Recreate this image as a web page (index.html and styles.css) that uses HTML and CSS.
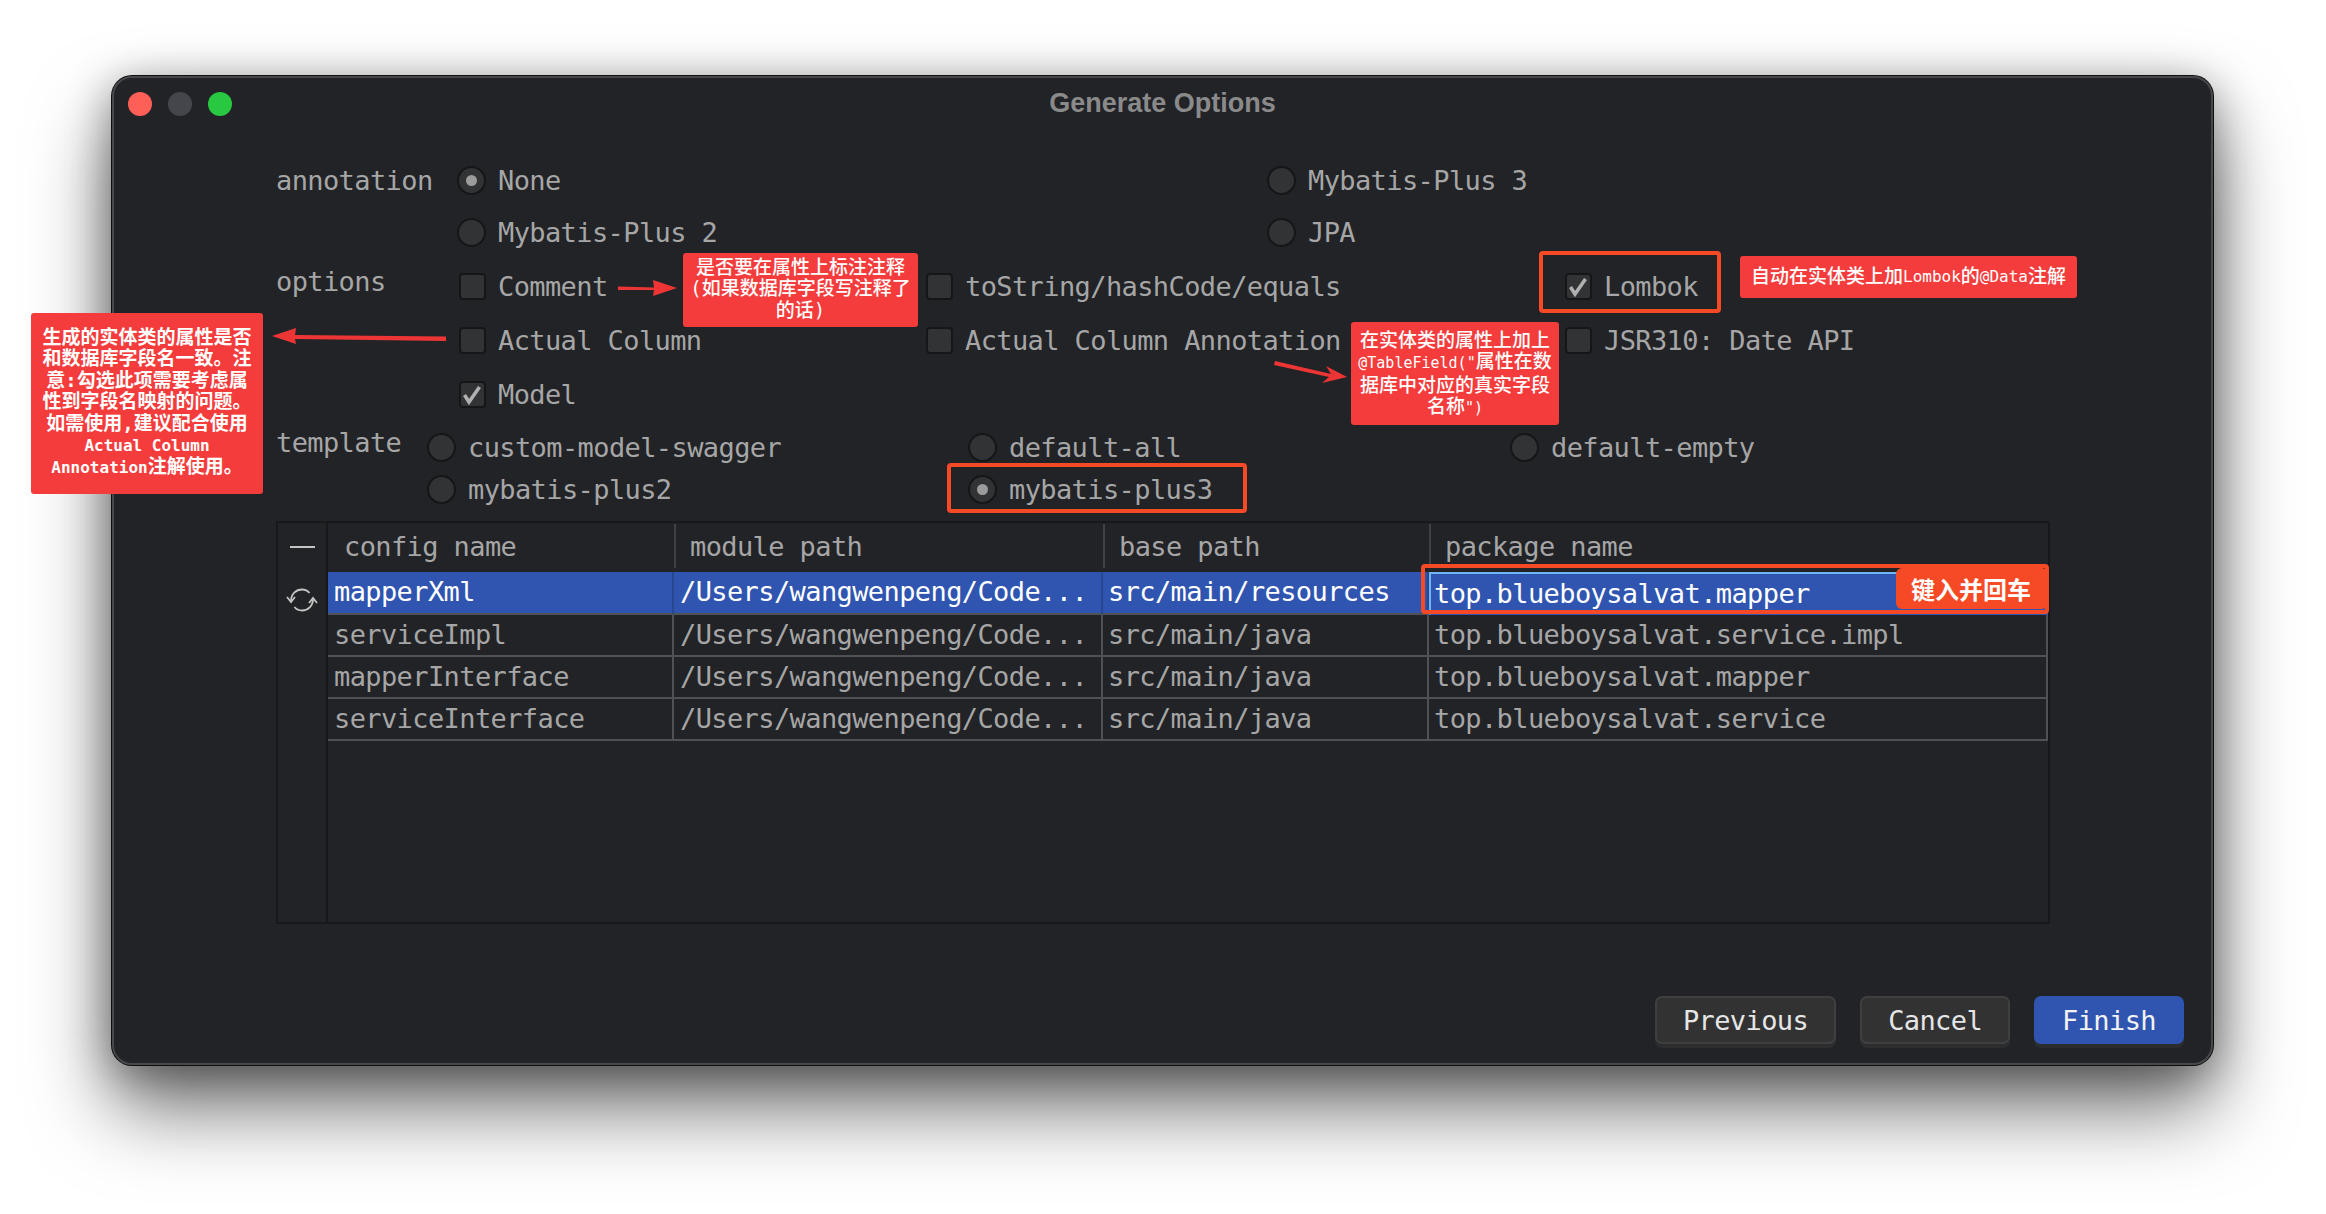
FILE: index.html
```html
<!DOCTYPE html>
<html lang="en">
<head>
    <meta charset="UTF-8">
    <title>Generate Options</title>
    <link rel="stylesheet" href="styles.css">
</head>
<body>
<div class="page">
    <div class="window">
        <div class="titlebar">
            <div class="lights">
                <span class="light light-red"></span>
                <span class="light light-gray"></span>
                <span class="light light-green"></span>
            </div>
            <div class="title">Generate Options</div>
        </div>

        <div class="form">
            <!-- annotation -->
            <div class="group group-annotation">
                <div class="label">annotation</div>
                <div class="opt"><span class="radio on"></span>None</div>
                <div class="opt"><span class="radio"></span>Mybatis-Plus 3</div>
                <div></div>
                <div class="opt"><span class="radio"></span>Mybatis-Plus 2</div>
                <div class="opt"><span class="radio"></span>JPA</div>
            </div>

            <!-- options -->
            <div class="group group-options">
                <div class="label label-up">options</div>
                <div class="opt"><span class="check"></span>Comment</div>
                <div class="opt"><span class="check"></span>toString/hashCode/equals</div>
                <div class="opt"><span class="check on"><svg viewBox="0 0 23 23"><path d="M3.500 12l4.500 7 10.500-15" /></svg></span>Lombok</div>
                <div></div>
                <div class="opt"><span class="check"></span>Actual Column</div>
                <div class="opt"><span class="check"></span>Actual Column Annotation</div>
                <div class="opt"><span class="check"></span>JSR310: Date API</div>
                <div></div>
                <div class="opt"><span class="check on"><svg viewBox="0 0 23 23"><path d="M3.500 12l4.500 7 10.500-15" /></svg></span>Model</div>
            </div>

            <!-- template -->
            <div class="group group-template">
                <div class="label label-up">template</div>
                <div class="opt"><span class="radio"></span>custom-model-swagger</div>
                <div class="opt"><span class="radio"></span>default-all</div>
                <div class="opt"><span class="radio"></span>default-empty</div>
                <div></div>
                <div class="opt"><span class="radio"></span>mybatis-plus2</div>
                <div class="opt"><span class="radio on"></span>mybatis-plus3</div>
            </div>

            <!-- config table -->
            <div class="table">
                <div class="tools">
                    <span class="minus"></span>
                    <svg class="refresh" viewBox="0 0 32 26">
                        <path d="M5 14C5 7 10 2.500 16 2.500c3 0 5.500 1 7.500 3.500" />
                        <path d="M1 10l4 5 4-5" />
                        <path d="M27 12c0 7-5 11.500-11 11.500-3 0-5.500-1-7.500-3.500" />
                        <path d="M23 16l4-5 4 5" />
                    </svg>
                </div>
                <div class="grid">
                    <div class="head">config name</div>
                    <div class="head">module path</div>
                    <div class="head">base path</div>
                    <div class="head">package name</div>

                    <div class="cell sel">mapperXml</div>
                    <div class="cell sel">/Users/wangwenpeng/Code...</div>
                    <div class="cell sel">src/main/resources</div>
                    <div class="cell sel edit">top.blueboysalvat.mapper</div>

                    <div class="cell">serviceImpl</div>
                    <div class="cell">/Users/wangwenpeng/Code...</div>
                    <div class="cell">src/main/java</div>
                    <div class="cell">top.blueboysalvat.service.impl</div>

                    <div class="cell">mapperInterface</div>
                    <div class="cell">/Users/wangwenpeng/Code...</div>
                    <div class="cell">src/main/java</div>
                    <div class="cell">top.blueboysalvat.mapper</div>

                    <div class="cell">serviceInterface</div>
                    <div class="cell">/Users/wangwenpeng/Code...</div>
                    <div class="cell">src/main/java</div>
                    <div class="cell">top.blueboysalvat.service</div>
                </div>
            </div>
        </div>

        <div class="footer">
            <button class="btn">Previous</button>
            <button class="btn">Cancel</button>
            <button class="btn btn-primary">Finish</button>
        </div>
    </div>

    <!-- screenshot annotations drawn on top -->
    <svg class="arrows" viewBox="0 0 2326 1214">
        <path d="M618 286.500L654 287.500 653 280 677 288 653 296 654 290 618 290z" />
        <path d="M446 336.500L295 335 296 328 272 336 296 344 295 339 446 341z" />
        <path d="M1275 361L1331 374 1326 366 1347 377 1322 383 1329 377 1274 365z" />
    </svg>
    <div class="mark mark-lombok"></div>
    <div class="mark mark-plus3"></div>
    <div class="mark mark-package"></div>

    <div class="note note-actual">生成的实体类的属性是否<br>和数据库字段名一致。注<br>意:勾选此项需要考虑属<br>性到字段名映射的问题。<br>如需使用,建议配合使用<br><span class="lat">Actual Column</span><br><span class="lat">Annotation</span>注解使用。</div>
    <div class="note note-comment">是否要在属性上标注注释<br>(如果数据库字段写注释了<br>的话)</div>
    <div class="note note-field">在实体类的属性上加上<br><span class="lat">@TableField("</span>属性在数<br>据库中对应的真实字段<br>名称<span class="lat">")</span></div>
    <div class="note note-lombok">自动在实体类上加<span class="lat">Lombok</span>的<span class="lat">@Data</span>注解</div>
    <div class="note note-enter">键入并回车</div>
</div>
</body>
</html>
```

FILE: styles.css
```css
* { box-sizing: border-box; margin: 0; padding: 0; }
html, body { width: 100%; height: 100%; overflow: hidden; background: #fff; }
body { font-family: "DejaVu Sans Mono", monospace; font-size: 27px; letter-spacing: -0.6px; color: #a6a6a6; }

.page {
    position: relative;
    width: 2326px; height: 1214px;
    padding: 76px 113px 149px 112px;
}

/* --- window --- */
.window {
    height: 100%;
    display: flex; flex-direction: column;
    background: #222327;
    border: 2px solid #47484b;
    border-radius: 20px;
    box-shadow: 0 0 0 1px #0e0e0e, 0 44px 80px rgba(0, 0, 0, 0.55), 0 8px 44px rgba(0, 0, 0, 0.38);
}
.titlebar {
    height: 52px; flex: none;
    display: grid; grid-template-columns: 1fr auto 1fr; align-items: center;
}
.lights { display: flex; gap: 16px; padding-left: 14px; }
.light { width: 24px; height: 24px; border-radius: 50%; }
.light-red { background: #fe5f57; }
.light-gray { background: #45464b; }
.light-green { background: #28c840; }
.title {
    font-family: "Liberation Sans", sans-serif; font-weight: 700; font-size: 27px;
    letter-spacing: 0; color: #8a8a8a; padding-bottom: 2px;
}

/* --- form --- */
.form { padding: 24px 0 0 162px; }
.group { display: grid; }
.group-annotation { grid-template-columns: 181px 810px 1fr; grid-auto-rows: 52px; margin-bottom: 1px; }
.group-options { grid-template-columns: 183px 467px 639px 1fr; grid-auto-rows: 54px; }
.group-template { grid-template-columns: 151px 541px 542px 1fr; grid-auto-rows: 42px; margin-top: 5px; }

.label { display: flex; align-items: center; }
.label-up { padding-bottom: 10px; }
.opt { display: flex; align-items: center; white-space: pre; }

.radio {
    width: 29px; height: 29px; flex: none; margin-right: 12px;
    display: flex; align-items: center; justify-content: center;
    background: #323334; border: 2px solid #151618; border-radius: 50%;
}
.radio.on::after {
    content: ""; width: 11px; height: 11px; border-radius: 50%; background: #9c9c9c;
}
.check {
    width: 27px; height: 27px; flex: none; margin-right: 12px;
    background: #323334; border: 2px solid #151618; border-radius: 4px;
}
.check svg { display: block; width: 23px; height: 23px; }
.check path { fill: none; stroke: #b0b0b0; stroke-width: 3.500; }

/* --- table --- */
.table {
    display: flex;
    width: 1774px; height: 403px; margin-top: 11px;
    border: 2px solid #17181a;
}
.tools {
    width: 50px; flex: none;
    display: flex; flex-direction: column; align-items: center;
    border-right: 2px solid #17181a;
}
.minus { width: 25px; height: 2px; margin-top: 23px; background: #c4c4c4; }
.refresh { width: 32px; height: 26px; margin-top: 39px; }
.refresh path { fill: none; stroke: #c4c4c4; stroke-width: 1.800; }

.grid {
    flex: 1; align-self: flex-start;
    display: grid;
    grid-template-columns: 346px 429px 326px 619px;
    grid-template-rows: 49px 43px repeat(3, 42px);
}
.head {
    display: flex; align-items: center;
    padding: 0 0 2px 16px;
    position: relative;
}
.head + .head::before {
    content: ""; position: absolute; left: 0; top: 1px; bottom: 4px;
    width: 2px; background: #404145;
}
.cell {
    display: flex; align-items: center;
    padding: 0 0 2px 6px;
    border-bottom: 2px solid #505154;
    border-right: 2px solid #505154;
    white-space: pre;
}
.cell:nth-child(4n+3), .cell:nth-child(4n) { padding-left: 5px; }
.cell.sel { background: #2f55b0; color: #fff; border-right-color: #27478f; }
.cell.sel.edit {
    padding-left: 3px;
    border: 1px solid #2f55b0; border-top: 2px solid #6fb6f5;
    border-left: 2px solid #6fb6f5;
}

/* --- footer --- */
.footer {
    margin-top: auto;
    display: flex; justify-content: flex-end; gap: 24px;
    padding: 0 27px 19px 0;
}
.btn {
    height: 48px; padding: 0 26px;
    font: inherit; letter-spacing: inherit; color: #e6e6e6;
    background: #323233; border: 2px solid #3f3f40; border-radius: 7px;
    box-shadow: 0 4px 0 #2c2d2f;
}
.btn-primary { background: #2f55b0; border-color: #2f55b0; color: #f2f2f2; }

/* --- annotations on top of the screenshot --- */
.arrows { position: absolute; left: 0; top: 0; width: 2326px; height: 1214px; pointer-events: none; }
.arrows path { fill: #ee3535; }

.mark { position: absolute; border: 4px solid #f64a26; border-radius: 4px; }
.mark-lombok { left: 1539px; top: 251px; width: 182px; height: 62px; }
.mark-plus3 { left: 947px; top: 463px; width: 300px; height: 50px; }
.mark-package { left: 1421px; top: 564px; width: 628px; height: 50px; }

.note {
    position: absolute;
    display: flex; align-items: center; justify-content: center;
    background: #f43c3c; color: #fff; border-radius: 3px;
    font-family: "DejaVu Sans Mono", "Noto Sans CJK SC", monospace;
    font-size: 19px; line-height: 21.400px; letter-spacing: 0; text-align: center;
    font-weight: 500; white-space: nowrap;
}
.lat { font-size: 16px; }
.note-actual { left: 31px; top: 313px; width: 232px; height: 181px; font-weight: 700; display: block; padding-top: 14px; }
.note-comment { left: 683px; top: 253px; width: 235px; height: 74px; display: block; padding-top: 4px; }
.note-field { left: 1351px; top: 322px; width: 208px; height: 103px; display: block; padding-top: 8px; }
.note-field .lat { font-size: 15px; }
.note-lombok { left: 1740px; top: 256px; width: 337px; height: 42px; }
.note-enter {
    left: 1896px; top: 568px; width: 152px; height: 41px; padding-right: 2px;
    background: #f64a26; border-radius: 6px;
    font-family: "Noto Sans CJK SC", sans-serif; font-size: 24px; font-weight: 700;
}
```
